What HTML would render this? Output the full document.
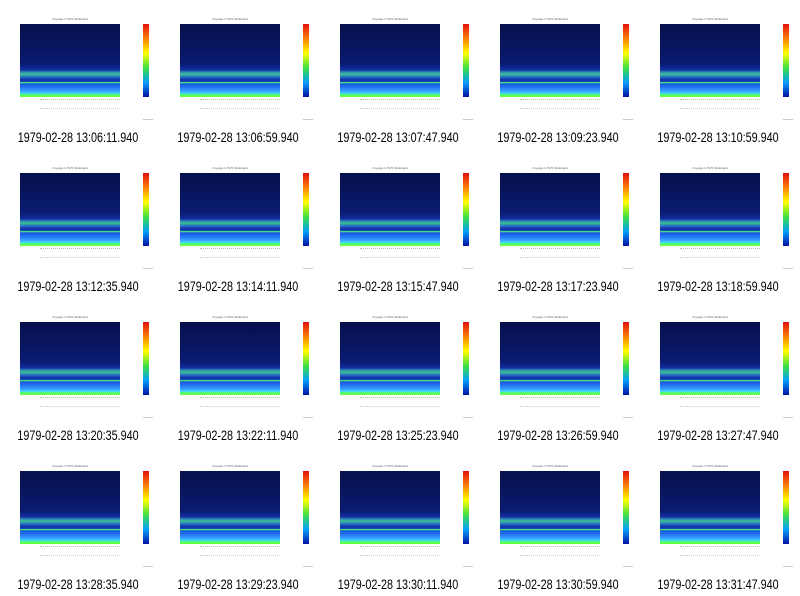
<!DOCTYPE html>
<html><head><style>
body{margin:0;width:800px;height:596px;background:#fff;overflow:hidden;font-family:"Liberation Sans",sans-serif;position:relative}
.c{position:absolute;width:160px;height:149px}
.t{position:absolute;left:20px;top:17px;width:100px;text-align:center;font-size:3px;color:#666}
.p{position:absolute;left:20px;top:24px;width:100px;height:73px;
background:linear-gradient(to bottom,#06104a 0%,#081660 30%,#0a1c74 55%,#1230a0 63%,#2f8fb8 66%,#3ac08a 69%,#2a78c8 72%,#1232a8 76%,#1538b8 79%,#40e080 79.5%,#40e080 81%,#1a50e0 81.5%,#2070f0 86%,#3aa0ff 92%,#40d8ff 95%,#50ff60 97%,#70ff40 100%)}
.p:after{content:"";position:absolute;left:-10px;top:0;width:1px;height:73px}
.b{position:absolute;left:143px;top:24px;width:6px;height:73px;background:linear-gradient(to bottom,#e01010,#ff8000 20%,#ffff00 40%,#40e040 60%,#00a0ff 80%,#0010a0)}
.a{position:absolute;left:40px;top:99px;width:80px;height:8px;border-top:1px dotted #bbb;border-bottom:1px dotted #ccc}
.k{position:absolute;left:-2px;top:130px;width:160px;text-align:center;font-size:13.5px;color:#000;white-space:nowrap;transform:scaleX(0.8)}
.s{position:absolute;left:143px;top:119px;width:10px;height:1px;background:#ccc}
</style></head><body>
<div class="c" style="left:0;top:0"><div class="t">Voyager-1 PWS Wideband</div><div class="p"></div><div class="a"></div><div class="b"></div><div class="s"></div><div class="k">1979-02-28 13:06:11.940</div></div>
<div class="c" style="left:160px;top:0"><div class="t">Voyager-1 PWS Wideband</div><div class="p"></div><div class="a"></div><div class="b"></div><div class="s"></div><div class="k">1979-02-28 13:06:59.940</div></div>
<div class="c" style="left:320px;top:0"><div class="t">Voyager-1 PWS Wideband</div><div class="p"></div><div class="a"></div><div class="b"></div><div class="s"></div><div class="k">1979-02-28 13:07:47.940</div></div>
<div class="c" style="left:480px;top:0"><div class="t">Voyager-1 PWS Wideband</div><div class="p"></div><div class="a"></div><div class="b"></div><div class="s"></div><div class="k">1979-02-28 13:09:23.940</div></div>
<div class="c" style="left:640px;top:0"><div class="t">Voyager-1 PWS Wideband</div><div class="p"></div><div class="a"></div><div class="b"></div><div class="s"></div><div class="k">1979-02-28 13:10:59.940</div></div>
<div class="c" style="left:0;top:149px"><div class="t">Voyager-1 PWS Wideband</div><div class="p"></div><div class="a"></div><div class="b"></div><div class="s"></div><div class="k">1979-02-28 13:12:35.940</div></div>
<div class="c" style="left:160px;top:149px"><div class="t">Voyager-1 PWS Wideband</div><div class="p"></div><div class="a"></div><div class="b"></div><div class="s"></div><div class="k">1979-02-28 13:14:11.940</div></div>
<div class="c" style="left:320px;top:149px"><div class="t">Voyager-1 PWS Wideband</div><div class="p"></div><div class="a"></div><div class="b"></div><div class="s"></div><div class="k">1979-02-28 13:15:47.940</div></div>
<div class="c" style="left:480px;top:149px"><div class="t">Voyager-1 PWS Wideband</div><div class="p"></div><div class="a"></div><div class="b"></div><div class="s"></div><div class="k">1979-02-28 13:17:23.940</div></div>
<div class="c" style="left:640px;top:149px"><div class="t">Voyager-1 PWS Wideband</div><div class="p"></div><div class="a"></div><div class="b"></div><div class="s"></div><div class="k">1979-02-28 13:18:59.940</div></div>
<div class="c" style="left:0;top:298px"><div class="t">Voyager-1 PWS Wideband</div><div class="p"></div><div class="a"></div><div class="b"></div><div class="s"></div><div class="k">1979-02-28 13:20:35.940</div></div>
<div class="c" style="left:160px;top:298px"><div class="t">Voyager-1 PWS Wideband</div><div class="p"></div><div class="a"></div><div class="b"></div><div class="s"></div><div class="k">1979-02-28 13:22:11.940</div></div>
<div class="c" style="left:320px;top:298px"><div class="t">Voyager-1 PWS Wideband</div><div class="p"></div><div class="a"></div><div class="b"></div><div class="s"></div><div class="k">1979-02-28 13:25:23.940</div></div>
<div class="c" style="left:480px;top:298px"><div class="t">Voyager-1 PWS Wideband</div><div class="p"></div><div class="a"></div><div class="b"></div><div class="s"></div><div class="k">1979-02-28 13:26:59.940</div></div>
<div class="c" style="left:640px;top:298px"><div class="t">Voyager-1 PWS Wideband</div><div class="p"></div><div class="a"></div><div class="b"></div><div class="s"></div><div class="k">1979-02-28 13:27:47.940</div></div>
<div class="c" style="left:0;top:447px"><div class="t">Voyager-1 PWS Wideband</div><div class="p"></div><div class="a"></div><div class="b"></div><div class="s"></div><div class="k">1979-02-28 13:28:35.940</div></div>
<div class="c" style="left:160px;top:447px"><div class="t">Voyager-1 PWS Wideband</div><div class="p"></div><div class="a"></div><div class="b"></div><div class="s"></div><div class="k">1979-02-28 13:29:23.940</div></div>
<div class="c" style="left:320px;top:447px"><div class="t">Voyager-1 PWS Wideband</div><div class="p"></div><div class="a"></div><div class="b"></div><div class="s"></div><div class="k">1979-02-28 13:30:11.940</div></div>
<div class="c" style="left:480px;top:447px"><div class="t">Voyager-1 PWS Wideband</div><div class="p"></div><div class="a"></div><div class="b"></div><div class="s"></div><div class="k">1979-02-28 13:30:59.940</div></div>
<div class="c" style="left:640px;top:447px"><div class="t">Voyager-1 PWS Wideband</div><div class="p"></div><div class="a"></div><div class="b"></div><div class="s"></div><div class="k">1979-02-28 13:31:47.940</div></div>
</body></html>
